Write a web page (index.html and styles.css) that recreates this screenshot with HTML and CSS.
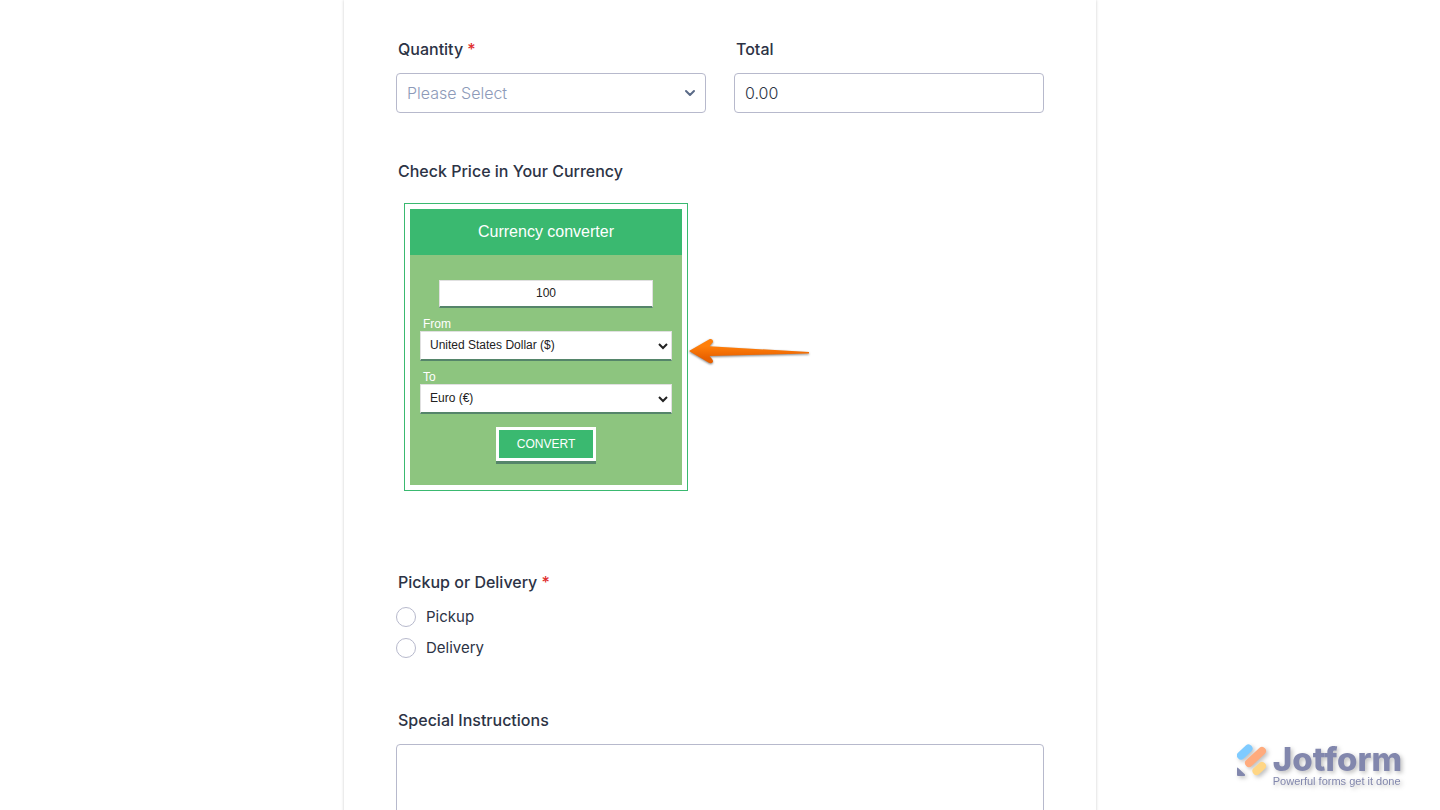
FILE: index.html
```html
<!DOCTYPE html>
<html lang="en">
<head>
<meta charset="utf-8">
<meta name="viewport" content="width=device-width, initial-scale=1">
<title>Order Form</title>
<link rel="stylesheet" href="styles.css">
</head>
<body>
<form class="form">
  <div class="row">
    <div class="question">
      <label class="label" for="quantity">Quantity <span class="required">*</span></label>
      <div class="select-wrap">
        <select class="field field-select" id="quantity"><option>Please Select</option></select>
        <svg class="chevron" viewBox="0 0 12 8" aria-hidden="true"><path d="M2 2 6 6 10 2" /></svg>
      </div>
    </div>
    <div class="question">
      <label class="label" for="total">Total</label>
      <input class="field" id="total" type="text" value="0.00">
    </div>
  </div>

  <div class="question question-converter">
    <span class="label">Check Price in Your Currency</span>
    <div class="converter">
      <div class="converter-title">Currency converter</div>
      <div class="converter-body">
        <input class="amount" type="text" value="100" aria-label="Amount">
        <label class="converter-label" for="from">From</label>
        <select class="currency" id="from"><option>United States Dollar ($)</option></select>
        <label class="converter-label" for="to">To</label>
        <select class="currency" id="to"><option>Euro (€)</option></select>
        <button class="convert" type="button">CONVERT</button>
      </div>
      <svg class="arrow" viewBox="0 0 124 30" aria-hidden="true">
        <defs>
          <linearGradient id="orange" x1="0" y1="0" x2="0" y2="1">
            <stop offset="0.3" stop-color="#ff7f0a"/>
            <stop offset="0.8" stop-color="#e86000"/>
          </linearGradient>
        </defs>
        <path d="M1 14 21 2.400C24 .7 26.500 4.500 24 6.300L21.500 9.300 121 15V16.500L21.500 19 24 22C26.500 25 24 27.500 20.500 25.500Z" fill="url(#orange)"/>
      </svg>
    </div>
  </div>

  <fieldset class="question choices">
    <legend class="label">Pickup or Delivery <span class="required">*</span></legend>
    <label class="choice"><input class="radio" type="radio" name="method">Pickup</label>
    <label class="choice"><input class="radio" type="radio" name="method">Delivery</label>
  </fieldset>

  <div class="question">
    <label class="label" for="notes">Special Instructions</label>
    <textarea class="field notes" id="notes"></textarea>
  </div>
</form>

<div class="brand">
  <svg class="brand-mark" viewBox="0 0 32 34" aria-hidden="true">
    <g fill="none" stroke-linecap="round">
      <path d="M5 12.500 12.500 5.500" stroke="#7fcbff" stroke-width="8"/>
      <path d="M13 20 26 8" stroke="#ffab7d" stroke-width="8"/>
      <path d="M20.500 28 26 23" stroke="#ffd685" stroke-width="8"/>
    </g>
    <path d="M1 25.500Q1 24 2.200 25L9 31.500Q9.500 33 8 33H2Q1 33 1 32Z" fill="#8287ad"/>
  </svg>
  <div class="brand-text">
    <span class="brand-name">Jotform</span>
    <span class="brand-tagline">Powerful forms get it done</span>
  </div>
</div>
</body>
</html>
```

FILE: styles.css
```css
* {
  box-sizing: border-box;
}

body {
  margin: 0;
  height: 100vh;
  overflow: hidden;
  background: #fff;
  color: #2c3345;
  font-family: Inter, "Liberation Sans", sans-serif;
  font-size: 16px;
}

.form {
  max-width: 752px;
  margin: 0 auto;
  padding: 39px 52px 52px;
  display: flex;
  flex-direction: column;
  gap: 48px;
  box-shadow: 0 0 3px rgba(0, 0, 0, 0.2);
}

.row {
  display: grid;
  grid-template-columns: 1fr 1fr;
  gap: 28px;
}

.question {
  min-width: 0;
  display: flex;
  flex-direction: column;
  gap: 14px;
}

.label {
  padding: 0 2px;
  font-weight: 500;
  line-height: 20px;
}

.required {
  color: #e02d2d;
}

.field {
  display: block;
  width: 100%;
  height: 40px;
  padding: 0 10px;
  border: 1px solid #b7b9cc;
  border-radius: 4px;
  background: #fff;
  color: #2c3345;
  font: 300 16px/20px Inter, "Liberation Sans", sans-serif;
}

.select-wrap {
  position: relative;
}

.field-select {
  appearance: none;
  color: #8d9ab8;
}

.chevron {
  position: absolute;
  top: 16px;
  right: 10px;
  width: 12px;
  height: 8px;
  fill: none;
  stroke: #5a6a87;
  stroke-width: 2;
  stroke-linecap: round;
  stroke-linejoin: round;
  pointer-events: none;
}

.question-converter {
  gap: 22px;
  margin-bottom: 33px;
}

.converter {
  position: relative;
  width: 284px;
  margin-left: 8px;
  padding: 5px;
  border: 1px solid #3ab970;
  font-family: "Liberation Sans", Arial, sans-serif;
}

.converter-title {
  background: #3ab970;
  color: #fff;
  font-size: 16px;
  line-height: 46px;
  text-align: center;
}

.converter-body {
  display: flex;
  flex-direction: column;
  padding: 25px 10px 24px;
  background: #8dc57f;
}

.amount,
.currency {
  border: 1px solid #e0e0e0;
  border-bottom: 2px solid #55856a;
  border-radius: 0;
  background: #fff;
  color: #222;
  font: 12px "Liberation Sans", Arial, sans-serif;
}

.amount {
  align-self: center;
  width: 214px;
  height: 28px;
  padding: 0 0 2px;
  text-align: center;
}

.converter-label {
  margin-top: 10px;
  padding-left: 3px;
  color: #fff;
  font-size: 12px;
  line-height: 13px;
}

.currency {
  height: 30px;
  padding: 0 0 2px 5px;
}

.convert {
  align-self: center;
  width: 100px;
  height: 34px;
  margin-top: 13px;
  padding: 0;
  border: 3px solid #fff;
  background: #3ab970;
  box-shadow: 0 3px 0 #55856a;
  color: #fff;
  font: 12px "Liberation Sans", Arial, sans-serif;
}

.arrow {
  position: absolute;
  top: 133px;
  left: 283px;
  width: 124px;
  height: 30px;
  filter: drop-shadow(0 1px 1px rgba(0, 0, 0, 0.5));
}

.choices {
  margin: 0;
  padding: 0;
  border: 0;
  gap: 11px;
}

.choices .label {
  margin-bottom: 15px;
}

.choice {
  display: flex;
  align-items: center;
  gap: 10px;
  font-size: 15px;
  line-height: 20px;
}

.radio {
  appearance: none;
  width: 20px;
  height: 20px;
  margin: 0;
  border: 1px solid #b7b9cc;
  border-radius: 50%;
  background: #fff;
}

.choices + .question {
  margin-top: 4px;
}

.notes {
  height: 160px;
  padding: 10px;
  resize: none;
}

.brand {
  position: fixed;
  right: 38px;
  bottom: 23px;
  display: flex;
  gap: 5px;
  color: #8287ad;
  filter: drop-shadow(2px 2px 2px rgba(0, 0, 0, 0.25));
}

.brand-mark {
  width: 32px;
  height: 34px;
}

.brand-text {
  display: flex;
  flex-direction: column;
}

.brand-name {
  font-size: 33px;
  font-weight: 800;
  line-height: 32px;
}

.brand-tagline {
  font: 11px/12px "Liberation Sans", Arial, sans-serif;
}
```
